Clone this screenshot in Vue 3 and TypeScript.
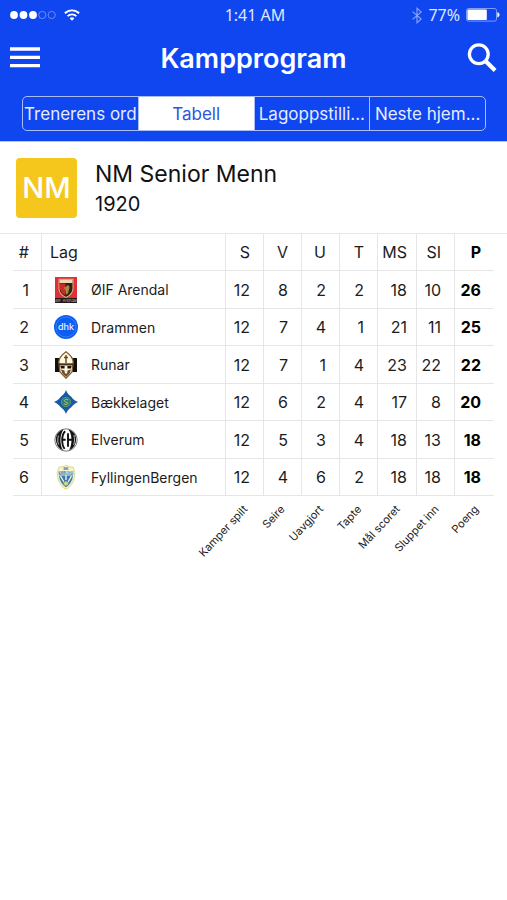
<script setup lang="ts">
import { ref } from 'vue'

interface Team {
  name: string
  crest: string
  stats: number[]
}

const tabs: string[] = ['Trenerens ord', 'Tabell', 'Lagoppstilli...', 'Neste hjem...']
const activeTab = ref<number>(1)

const columns: { short: string; label: string }[] = [
  { short: 'S', label: 'Kamper spilt' },
  { short: 'V', label: 'Seire' },
  { short: 'U', label: 'Uavgjort' },
  { short: 'T', label: 'Tapte' },
  { short: 'MS', label: 'Mål scoret' },
  { short: 'SI', label: 'Sluppet inn' },
  { short: 'P', label: 'Poeng' },
]

const teams: Team[] = [
  { name: 'ØIF Arendal', crest: 'arendal', stats: [12, 8, 2, 2, 18, 10, 26] },
  { name: 'Drammen', crest: 'drammen', stats: [12, 7, 4, 1, 21, 11, 25] },
  { name: 'Runar', crest: 'runar', stats: [12, 7, 1, 4, 23, 22, 22] },
  { name: 'Bækkelaget', crest: 'baekkelaget', stats: [12, 6, 2, 4, 17, 8, 20] },
  { name: 'Elverum', crest: 'elverum', stats: [12, 5, 3, 4, 18, 13, 18] },
  { name: 'FyllingenBergen', crest: 'fyllingen', stats: [12, 4, 6, 2, 18, 18, 18] },
]
</script>

<template>
  <div class="app">
    <header class="header">
      <div class="status">
        <div class="signal">
          <svg width="46" height="10" viewBox="0 0 46 10" aria-hidden="true">
            <circle cx="4" cy="5" r="3.9" fill="#fff" />
            <circle cx="13.5" cy="5" r="3.9" fill="#fff" />
            <circle cx="23" cy="5" r="3.9" fill="#fff" />
            <circle cx="32.3" cy="5" r="3.6" fill="none" stroke="#7f9df8" stroke-width=".8" />
            <circle cx="41.7" cy="5" r="3.6" fill="none" stroke="#7f9df8" stroke-width=".8" />
          </svg>
          <svg width="16" height="12" viewBox="0 0 16 12" fill="none" stroke="#fff" aria-hidden="true">
            <path d="M.9 4.3a10.2 10.2 0 0 1 14.2 0" stroke-width="1.9" />
            <path d="M3.6 7.1a6.3 6.3 0 0 1 8.8 0" stroke-width="1.8" />
            <path d="M8 11.8 5.6 9.3a3.5 3.5 0 0 1 4.8 0z" fill="#fff" stroke="none" />
          </svg>
        </div>
        <span class="clock">1:41 AM</span>
        <div class="power">
          <svg width="10" height="17" viewBox="0 0 10 17" fill="none" stroke="#8ba7fa" stroke-width="1.1" aria-hidden="true">
            <path d="M.6 4.6 9.2 12 5 15.8V1.2L9.2 5 .6 12.4" />
          </svg>
          <span>77%</span>
          <svg class="battery" width="34" height="14" viewBox="0 0 34 14" aria-hidden="true">
            <rect x=".5" y=".5" width="30" height="12.6" rx="2" fill="none" stroke="#7f9df8" />
            <rect x="1.4" y="1.6" width="19.4" height="10.4" rx=".8" fill="#fff" />
            <path d="M31.4 4.200c2.800.6 2.800 4.600 0 5.200z" fill="#fff" />
          </svg>
        </div>
      </div>

      <div class="titlebar">
        <button class="icon-button" type="button" aria-label="Meny">
          <svg width="30" height="21" viewBox="0 0 30 21" aria-hidden="true">
            <path d="M0 2h30M0 10.3h30M0 18.6h30" stroke="#fff" stroke-width="3.3" />
          </svg>
        </button>
        <h1>Kampprogram</h1>
        <button class="icon-button" type="button" aria-label="Søk">
          <svg width="30" height="30" viewBox="0 0 30 30" fill="none" stroke="#fff" aria-hidden="true">
            <circle cx="11.8" cy="11.300" r="9.400" stroke-width="3.300" />
            <path d="m18.300 17.800 9.800 9.800" stroke-width="4.200" />
          </svg>
        </button>
      </div>

      <nav class="tabs">
        <button
          v-for="(tab, i) in tabs"
          :key="tab"
          type="button"
          :class="{ active: i === activeTab }"
          :aria-pressed="i === activeTab"
          @click="activeTab = i"
        >{{ tab }}</button>
      </nav>
    </header>

    <section class="league">
      <div class="badge">NM</div>
      <div>
        <h2>NM Senior Menn</h2>
        <p>1920</p>
      </div>
    </section>

    <main class="standings">
      <table>
        <thead>
          <tr>
            <th class="rank">#</th>
            <th class="team-head">Lag</th>
            <th v-for="c in columns" :key="c.short" class="stat" :class="c.short.toLowerCase()">{{ c.short }}</th>
          </tr>
        </thead>
        <tbody>
          <tr v-for="(team, i) in teams" :key="team.name">
            <td class="rank">{{ i + 1 }}</td>
            <td class="team">
              <div class="team-cell">
                <svg v-if="team.crest === 'arendal'" class="crest" viewBox="0 0 24 28" aria-hidden="true">
                  <path d="M1 1h22v26H1z" fill="#df3038" />
                  <path d="M1 22h22v5H1z" fill="#24171a" />
                  <path d="M5 3.4h14v9.2c0 4.6-3.4 7.3-7 8.8-3.600-1.500-7-4.200-7-8.800z" fill="#2b2118" stroke="#d5ad74" stroke-width="1.100" />
                  <path d="M5.500 4h13v3h-13z" fill="#f0d8b4" />
                  <path d="M6 7.400h5.500v12C8.500 18 6.200 16 6 12.600z" fill="#c52a2c" />
                  <path d="M13.500 9c2 .6 2.600 2.600 1.500 4.400l-1 4-1.800 1.200-.9-4.600-1.600-2.600 2.100-.4z" fill="#ab873f" />
                  <text x="12" y="26" text-anchor="middle" font-size="4" fill="#b9aeb0">ØIF Arendal</text>
                </svg>
                <svg v-else-if="team.crest === 'drammen'" class="crest" viewBox="0 0 24 28" aria-hidden="true">
                  <circle cx="12" cy="14" r="12" fill="#0c5df2" />
                  <circle cx="12" cy="14" r="10" fill="none" stroke="#3d82f8" stroke-width=".8" />
                  <text x="12" y="17" text-anchor="middle" font-size="9" font-weight="500" fill="#e8f2ff">dhk</text>
                </svg>
                <svg v-else-if="team.crest === 'runar'" class="crest" viewBox="0 0 24 28" aria-hidden="true">
                  <path d="M1 7h22v14H1z" fill="#120f0c" />
                  <path d="M12 .8c3.600 2.700 7 5.600 7.200 10L18 21l-6 6.200L6 21 4.800 10.800C5 6.400 8.400 3.500 12 .8z" fill="#fff8e6" stroke="#80612f" stroke-width="1.300" />
                  <path d="M12 4v8M10 6.500h4" stroke="#6b4c22" stroke-width="1.500" />
                  <path d="M5 12.300h14v2.200H5z" fill="#4a3418" />
                  <path d="M6.400 15h4.200v2.400H7zM13.400 15h4.200l-.6 2.400h-3.600z" fill="#1c130b" />
                  <path d="m7 18.500 3 .8 2 2 2-2 3-.8-1.300 3.800L12 26l-3.700-3.700z" fill="#6c4d26" />
                  <path d="M10.200 20.600h3.600L12 23.200z" fill="#fff" />
                </svg>
                <svg v-else-if="team.crest === 'baekkelaget'" class="crest" viewBox="0 0 24 28" aria-hidden="true">
                  <path d="M12 2c1.200 3 2 4.200 5 6.400 2.300 2.900 4 4.300 7 5.600-3 1.300-4.700 2.700-7 5.600-3 2.200-3.800 3.400-5 6.400-1.200-3-2-4.200-5-6.400C4.700 16.700 3 15.300 0 14c3-1.300 4.700-2.700 7-5.600C10 6.200 10.800 5 12 2z" fill="#165ca2" />
                  <circle cx="12" cy="14" r="4.600" fill="#287b86" stroke="#7d9a5e" stroke-width=".8" />
                  <path d="M14.300 12c-2.500-1.500-5 .2-3.600 1.500 1.300 1.200 3.600.5 3.200 2-.4 1.200-2.800 1.200-4 .1" fill="none" stroke="#b4c458" stroke-width="1" />
                </svg>
                <svg v-else-if="team.crest === 'elverum'" class="crest" viewBox="0 0 24 28" aria-hidden="true">
                  <circle cx="12" cy="14" r="11.200" fill="#fff" stroke="#777" stroke-width="1" />
                  <path d="M9.500 3.600C3.500 5.500 1 10.500 2.200 16c.9 4.200 3.300 7 6.800 8.200C5.600 19 5.500 9 9.500 3.600zM14.500 3.600c6 1.900 8.500 6.900 7.300 12.400-.9 4.200-3.300 7-6.800 8.200C18.400 19 18.500 9 14.500 3.600z" fill="#161616" />
                  <path d="M11.200 5.200C7.400 8.400 7.200 18.600 10.600 22.800M7.500 13.700h4.200M14 7.200v13.600M14 13.700h5M18.400 7c1 4.400 1 9.600-.4 14" fill="none" stroke="#111" stroke-width="1.900" />
                  <path d="M4.500 9.500c-1 3-1 6 0 9M19.900 9c.8 3 .8 7-.2 10" fill="none" stroke="#ddd" stroke-width=".8" />
                </svg>
                <svg v-else class="crest" viewBox="0 0 24 28" aria-hidden="true">
                  <path d="M12 2c2 1.500 4 2.200 7 2l1.800 5c-.2 8-2.600 14-8.800 17.500C5.800 23 3.400 17 3.200 9L5 4c3 .2 5-.5 7-2z" fill="#f6f2cc" stroke="#ded98c" stroke-width="1" />
                  <path d="M4.500 8h15v3.600h-15z" fill="#4c86ad" />
                  <path d="M5 12.400h14c-.5 5.400-2.800 9-7 11.800-4.200-2.800-6.500-6.400-7-11.800z" fill="#397caa" />
                  <path d="m6.500 13 4.500 8M17.500 13 13 21M12 12v5" stroke="#f3f7e8" stroke-width="1.300" />
                  <circle cx="12" cy="20.500" r="2.600" fill="#d8d27c" stroke="#477f9e" stroke-width=".8" />
                  <text x="12" y="7" text-anchor="middle" font-size="4" font-weight="700" fill="#397caa">SK</text>
                  <text x="12" y="11" text-anchor="middle" font-size="3" font-weight="700" fill="#e6eff0">FYLLINGEN</text>
                </svg>
                <span>{{ team.name }}</span>
              </div>
            </td>
            <td
              v-for="(value, k) in team.stats"
              :key="k"
              class="stat"
              :class="columns[k].short.toLowerCase()"
            >{{ value }}</td>
          </tr>
        </tbody>
        <tfoot>
          <tr>
            <td colspan="2"></td>
            <td v-for="c in columns" :key="c.label">
              <div class="legend"><span>{{ c.label }}</span></div>
            </td>
          </tr>
        </tfoot>
      </table>
    </main>
  </div>
</template>

<style>
body {
  margin: 0;
  background: #fff;
}
</style>

<style scoped>
.app {
  min-height: 100vh;
  background: #fff;
  color: #1c1c1c;
  font-family: Inter, 'Liberation Sans', sans-serif;
}

button {
  margin: 0;
  padding: 0;
  border: 0;
  background: none;
  color: inherit;
  font: inherit;
  cursor: pointer;
}

.header {
  padding-bottom: 10px;
  border-bottom: 1px solid #b3c3fb;
  background: #0f46f0;
  color: #fff;
}

.status {
  display: grid;
  grid-template-columns: 1fr auto 1fr;
  align-items: center;
  height: 30px;
  padding: 0 7px 0 10px;
  font-family: 'Noto Sans', 'Open Sans', sans-serif;
  font-size: 16px;
  color: #dfe7ff;
}

.signal,
.power {
  display: flex;
  align-items: center;
}

.signal {
  gap: 8px;
}

.power {
  justify-content: flex-end;
  gap: 6px;
}

.titlebar {
  display: grid;
  grid-template-columns: 30px 1fr 30px;
  align-items: center;
  height: 55px;
  padding: 0 10px;
}

.icon-button,
.icon-button svg {
  display: block;
}

h1 {
  margin: 0;
  padding-top: 2px;
  text-align: center;
  font-size: 27px;
  line-height: 34px;
  font-weight: 600;
}

.tabs {
  display: flex;
  height: 33px;
  margin: 11px 21px 0 22px;
  border: 1px solid #a9bcfb;
  border-radius: 5px;
  overflow: hidden;
}

.tabs button {
  flex: 1 1 0;
  min-width: 0;
  overflow: hidden;
  white-space: nowrap;
  text-align: center;
  font-size: 17px;
  color: #e6ecff;
}

.tabs button + button {
  border-left: 1px solid #a9bcfb;
}

.tabs button.active {
  background: #fff;
  color: #2b55e0;
}

.league {
  display: flex;
  align-items: center;
  gap: 18px;
  height: 91px;
  padding: 0 16px;
}

.badge {
  display: flex;
  align-items: center;
  justify-content: center;
  width: 61px;
  height: 60px;
  border-radius: 4px;
  background: #f5c71c;
  color: #fff;
  font-size: 29px;
  font-weight: 500;
}

h2,
p {
  margin: 0;
  font-weight: 400;
  color: #111;
}

h2 {
  font-size: 23px;
  line-height: 32px;
}

p {
  font-size: 20px;
  line-height: 28px;
}

.standings {
  padding: 0 13px;
  border-top: 1px solid #e6e6e6;
}

table {
  width: 100%;
  table-layout: fixed;
  border-collapse: separate;
  border-spacing: 0;
  font-size: 16px;
}

th,
td {
  padding: 0;
  font-weight: 400;
}

thead th,
tbody td {
  height: 37px;
  box-sizing: border-box;
  border-bottom: 1px solid #e6e6e6;
}

tbody tr:nth-child(odd) td {
  height: 38px;
}

.rank {
  width: 29px;
  padding-right: 12px;
  border-right: 1px solid #e6e6e6;
  text-align: right;
}

.team-head {
  padding-left: 8px;
  text-align: left;
}

.team-cell {
  display: flex;
  align-items: center;
  gap: 13px;
  padding-left: 12px;
  font-size: 14px;
}

.crest {
  flex: none;
  width: 24px;
  height: 28px;
}

.stat {
  width: 38px;
  padding-right: 13px;
  border-left: 1px solid #e6e6e6;
  text-align: right;
}

.stat.ms {
  width: 39px;
  padding-right: 9px;
}

.stat.p {
  width: 40px;
  font-weight: 700;
  color: #000;
}

.legend {
  display: flex;
  justify-content: flex-end;
  height: 80px;
  padding: 3px 18px 0 0;
  font-size: 11px;
  line-height: 16px;
  white-space: nowrap;
}

.legend span {
  flex: none;
  height: 16px;
  transform: rotate(-47deg);
  transform-origin: right center;
}
</style>
